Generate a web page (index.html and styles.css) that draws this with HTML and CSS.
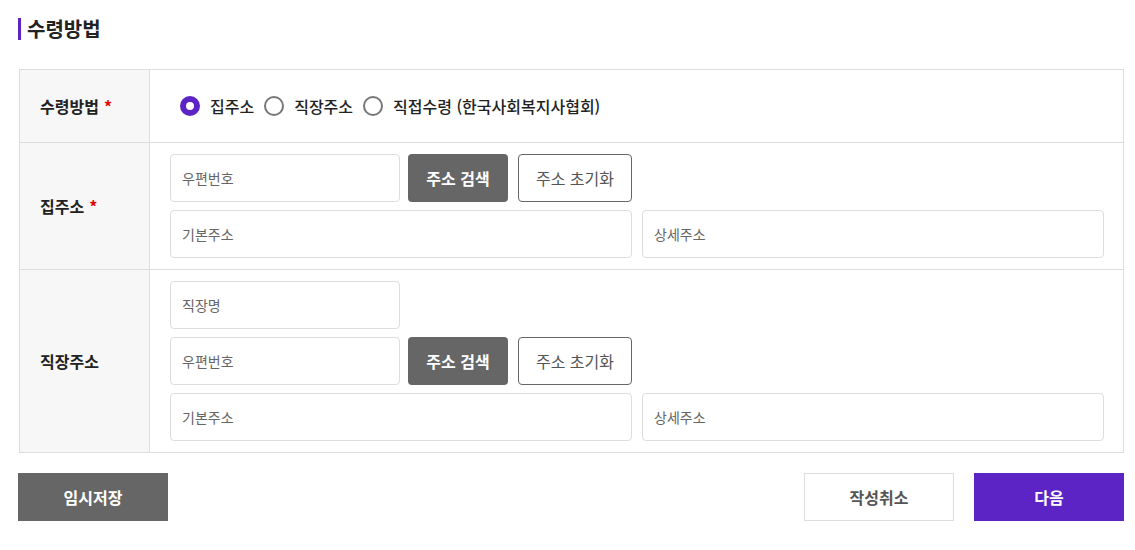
FILE: index.html
```html
<!DOCTYPE html>
<html lang="ko">

<head>
  <meta charset="UTF-8">
  <meta name="viewport" content="width=device-width, initial-scale=1.0">
  <title>수령방법</title>
  <link rel="stylesheet" href="styles.css">
</head>

<body>
  <div class="wrap">
    <h2 class="sec_title">수령방법</h2>

    <div class="form_table">
      <div class="row row_radio">
        <div class="th">수령방법 <span class="req">*</span></div>
        <div class="td">
          <label class="radio"><input type="radio" name="receive" checked><span class="mark"></span>집주소</label>
          <label class="radio"><input type="radio" name="receive"><span class="mark"></span>직장주소</label>
          <label class="radio"><input type="radio" name="receive"><span class="mark"></span>직접수령 (한국사회복지사협회)</label>
        </div>
      </div>

      <div class="row">
        <div class="th">집주소 <span class="req">*</span></div>
        <div class="td">
          <div class="line">
            <input class="inp inp_s" type="text" placeholder="우편번호">
            <button class="btn_search">주소 검색</button>
            <button class="btn_reset">주소 초기화</button>
          </div>
          <div class="line">
            <input class="inp inp_l" type="text" placeholder="기본주소">
            <input class="inp inp_l" type="text" placeholder="상세주소">
          </div>
        </div>
      </div>

      <div class="row">
        <div class="th">직장주소</div>
        <div class="td">
          <div class="line">
            <input class="inp inp_s" type="text" placeholder="직장명">
          </div>
          <div class="line">
            <input class="inp inp_s" type="text" placeholder="우편번호">
            <button class="btn_search">주소 검색</button>
            <button class="btn_reset">주소 초기화</button>
          </div>
          <div class="line">
            <input class="inp inp_l" type="text" placeholder="기본주소">
            <input class="inp inp_l" type="text" placeholder="상세주소">
          </div>
        </div>
      </div>
    </div>

    <div class="btn_area">
      <button class="btn btn_gray">임시저장</button>
      <div class="btn_right">
        <button class="btn btn_white">작성취소</button>
        <button class="btn btn_purple">다음</button>
      </div>
    </div>
  </div>
</body>

</html>
```

FILE: styles.css
```css
* {
  box-sizing: border-box;
}

body {
  margin: 0;
  font-family: 'Noto Sans CJK KR', 'Noto Sans', sans-serif;
  color: #222;
  background: #fff;
}

.wrap {
  width: 1106px;
  margin-left: 18px;
  padding-top: 18px;
}

.sec_title {
  margin: 0 0 29px;
  padding-left: 6px;
  border-left: 3px solid #5c23c5;
  font-size: 20px;
  font-weight: 700;
  line-height: 22px;
}

.form_table {
  margin-left: 1px;
  border: 1px solid #ddd;
  border-bottom: none;
}

.row {
  display: flex;
  border-bottom: 1px solid #ddd;
}

.th {
  flex: 0 0 130px;
  display: flex;
  align-items: center;
  padding-left: 20px;
  background: #f7f7f7;
  border-right: 1px solid #ddd;
  font-size: 16px;
  font-weight: 700;
  color: #222;
}

.req {
  color: #e60000;
  margin-left: 5px;
}

.td {
  flex: 1;
  padding: 11px 19px 11px 20px;
  display: flex;
  flex-direction: column;
  gap: 8px;
}

.row_radio .th {
  height: 72px;
}

.row_radio .td {
  flex-direction: row;
  align-items: center;
  gap: 10px;
  padding-top: 0;
  padding-bottom: 0;
  padding-left: 30px;
}

.radio {
  display: flex;
  align-items: center;
  gap: 10px;
  font-size: 16px;
  font-weight: 500;
  color: #222;
}

.radio input {
  display: none;
}

.radio .mark {
  width: 20px;
  height: 20px;
  border-radius: 50%;
  border: 2px solid #777;
  background: #fff;
}

.radio input:checked+.mark {
  border: 6px solid #5c23c5;
}

.line {
  display: flex;
  gap: 10px;
}

.inp {
  height: 48px;
  border: 1px solid #ddd;
  border-radius: 4px;
  padding: 0 11px;
  font-family: inherit;
  font-size: 14px;
  color: #222;
}

.inp::placeholder {
  color: #666;
}

.inp_s {
  width: 230px;
}

.inp_l {
  width: 462px;
}

.btn_search,
.btn_reset {
  height: 48px;
  border-radius: 4px;
  font-family: inherit;
  font-size: 16px;
}

.btn_search {
  width: 100px;
  margin-left: -2px;
  background: #666;
  border: none;
  color: #fff;
  font-weight: 700;
}

.btn_reset {
  width: 114px;
  background: #fff;
  border: 1px solid #666;
  color: #555;
}

.btn_area {
  display: flex;
  justify-content: space-between;
  margin-top: 20px;
}

.btn_right {
  display: flex;
  gap: 20px;
}

.btn {
  width: 150px;
  height: 48px;
  font-family: inherit;
  font-size: 16px;
  font-weight: 700;
  border: none;
}

.btn_gray {
  background: #666;
  color: #fff;
}

.btn_white {
  background: #fff;
  border: 1px solid #ddd;
  color: #555;
}

.btn_purple {
  background: #5c23c5;
  color: #fff;
}
```
